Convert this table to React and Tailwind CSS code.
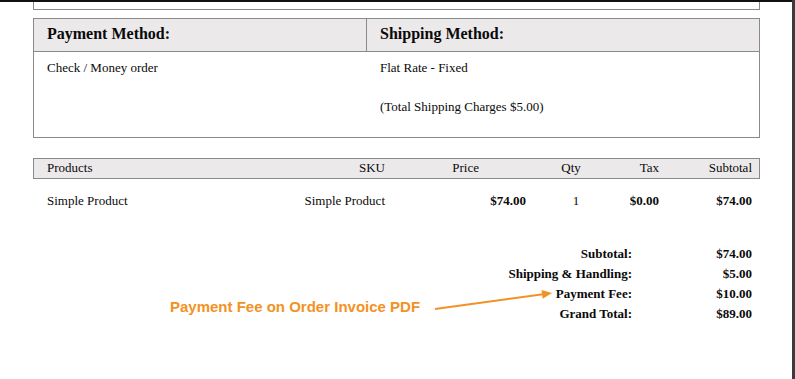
import React from 'react';

const serif = { fontFamily: '"Liberation Serif", "Times New Roman", serif' };

const totals = [
  { label: 'Subtotal:', value: '$74.00' },
  { label: 'Shipping & Handling:', value: '$5.00' },
  { label: 'Payment Fee:', value: '$10.00' },
  { label: 'Grand Total:', value: '$89.00' },
];

const InvoicePage = () => {
  return (
    <div className="relative flex h-[379px] w-full overflow-hidden bg-white text-[#0a0a0a]" style={serif}>
      <div className="flex-1 border-t-2 border-[#111] pl-[33px] pr-[32px]">
        {/* tail of the address block above */}
        <div className="h-[8px] border-x border-b border-[#8a8a8a]" />

        {/* payment / shipping methods */}
        <div className="mt-[8px] border border-[#8a8a8a]">
          <div className="grid grid-cols-[333px_1fr] border-b border-[#8a8a8a] bg-[#ece9ea]">
            <div className="h-[32px] border-r border-[#8a8a8a] pl-[13px] pt-[5px] text-[16px] font-bold leading-[20px]">
              Payment Method:
            </div>
            <div className="h-[32px] pl-[13px] pt-[5px] text-[16px] font-bold leading-[20px]">
              Shipping Method:
            </div>
          </div>
          <div className="grid h-[85px] grid-cols-[333px_1fr] text-[13px] leading-4">
            <div className="pl-[13px] pt-[8px]">Check / Money order</div>
            <div className="pl-[13px] pt-[8px]">
              <p>Flat Rate - Fixed</p>
              <p className="mt-[23px]">(Total Shipping Charges $5.00)</p>
            </div>
          </div>
        </div>

        {/* ordered items */}
        <div className="mt-[20px] grid h-[21px] grid-cols-[266px_85px_146px_80px_48px_1fr] border border-[#8a8a8a] bg-[#ece9ea] pt-[1px] text-[13px] leading-4">
          <div className="pl-[13px]">Products</div>
          <div className="text-right">SKU</div>
          <div className="pr-[52px] text-right">Price</div>
          <div className="text-center">Qty</div>
          <div className="text-right">Tax</div>
          <div className="pr-[7px] text-right">Subtotal</div>
        </div>
        <div className="mt-[14px] grid grid-cols-[267px_85px_146px_80px_48px_1fr] text-[13px] leading-4">
          <div className="pl-[14px]">Simple Product</div>
          <div className="text-right">Simple Product</div>
          <div className="pr-[5px] text-right font-bold">$74.00</div>
          <div className="pl-[10px] text-center">1</div>
          <div className="text-right font-bold">$0.00</div>
          <div className="pr-[8px] text-right font-bold">$74.00</div>
        </div>

        {/* order totals */}
        <div className="mt-[35px] flex flex-col text-[13px] font-bold leading-[20px]">
          {totals.map((row) => (
            <div key={row.label} className="flex justify-end">
              <div className="text-right">{row.label}</div>
              <div className="w-[128px] pr-[8px] text-right">{row.value}</div>
            </div>
          ))}
        </div>
      </div>
      <div className="w-[3px] bg-[#3b3b3d]" />

      {/* callout */}
      <div
        className="absolute left-[170px] top-[297px] whitespace-nowrap text-[15px] font-bold leading-[20px] text-[#f39224]"
        style={{ fontFamily: '"Liberation Sans", Arial, sans-serif' }}
      >
        Payment Fee on Order Invoice PDF
      </div>
      <svg className="absolute left-[430px] top-[283px]" width="130" height="32" viewBox="0 0 130 32">
        <line x1="5" y1="26" x2="113" y2="11.3" stroke="#f39224" strokeWidth="2" />
        <polygon points="122,10 112.7,15.8 111.5,6.9" fill="#f39224" />
      </svg>
    </div>
  );
};

export default function App() {
  return <InvoicePage />;
}
